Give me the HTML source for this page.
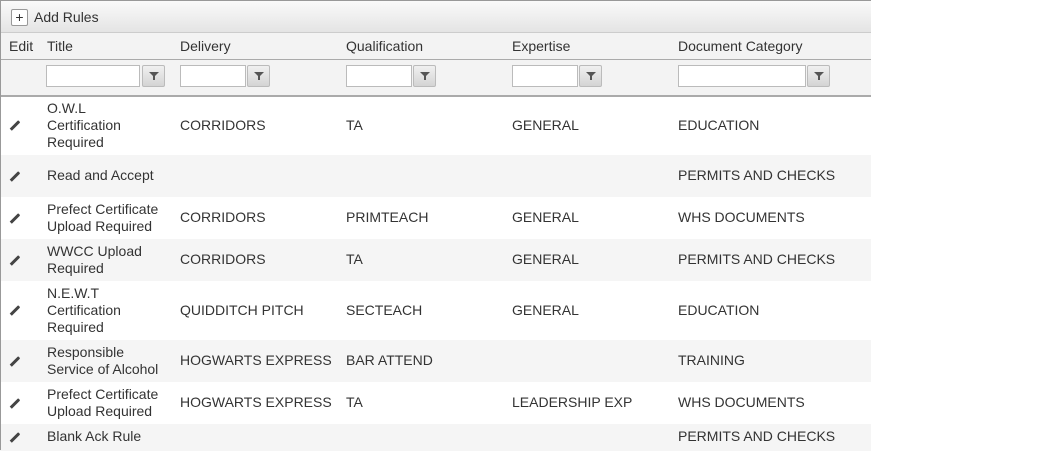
<!DOCTYPE html>
<html><head><style>
body{margin:0;width:1050px;height:450px;background:#fff;font-family:"Liberation Sans",sans-serif;font-size:14px;color:#333;position:relative;overflow:hidden}
#g{position:absolute;left:0;top:0;width:871px;height:450px;border-top:1px solid #999;box-sizing:border-box}
.lb{position:absolute;left:0;top:0;width:1px;height:450px;background:#999;z-index:5}
.tb{position:absolute;left:0;top:0;width:871px;height:31px;background:linear-gradient(#fafafa,#e4e4e4);border-bottom:1px solid #ccc}
.hd{position:absolute;left:0;top:32px;width:871px;height:26px;background:#f3f3f3;border-bottom:1px solid #aaa}
.fl{position:absolute;left:0;top:59px;width:871px;height:35px;background:#f3f3f3;border-bottom:2px solid #aaa}
.t{position:absolute;line-height:17px;white-space:nowrap}
.r{position:absolute;left:0;width:871px}
.alt{background:#f5f5f5}
.in{position:absolute;top:64px;height:20px;border:1px solid #bbb;background:#fff}
.fb{position:absolute;top:64px;width:21px;height:20px;border:1px solid #bbb;border-radius:2px;background:linear-gradient(#f0f0f0,#d4d4d4)}
.fb:after{content:"";position:absolute;left:6px;top:6px;border-left:5px solid transparent;border-right:5px solid transparent;border-top:5px solid #555}
.fb:before{content:"";position:absolute;left:10px;top:9px;width:2px;height:5px;background:#555}
.pen{position:absolute;left:9px;width:12px;height:3px;background:#444;transform:rotate(-45deg);border-radius:0 1px 1px 0}
</style></head><body>
<div id="g">
<div class="tb"></div>
<div style="position:absolute;left:11px;top:8px;width:15px;height:15px;border:1px solid #999;border-radius:2px;background:#fff;font-size:14px;line-height:14px;text-align:center">+</div>
<div class="t" style="left:34px;top:8px">Add Rules</div>
<div class="hd"></div>
<div class="t" style="left:9px;top:37px">Edit</div>
<div class="t" style="left:47px;top:37px">Title</div>
<div class="t" style="left:180px;top:37px">Delivery</div>
<div class="t" style="left:346px;top:37px">Qualification</div>
<div class="t" style="left:512px;top:37px">Expertise</div>
<div class="t" style="left:678px;top:37px">Document Category</div>
<div class="fl"></div>
<div class="in" style="left:46px;width:92px"></div><div class="fb" style="left:142px"></div>
<div class="in" style="left:180px;width:64px"></div><div class="fb" style="left:247px"></div>
<div class="in" style="left:346px;width:64px"></div><div class="fb" style="left:413px"></div>
<div class="in" style="left:512px;width:64px"></div><div class="fb" style="left:579px"></div>
<div class="in" style="left:678px;width:126px"></div><div class="fb" style="left:807px"></div>

<div class="r alt" style="top:154px;height:42px"></div>
<div class="r alt" style="top:238px;height:42px"></div>
<div class="r alt" style="top:339px;height:42px"></div>
<div class="r alt" style="top:423px;height:27px"></div>

<div class="pen" style="top:123px"></div>
<div class="t" style="left:47px;top:99px">O.W.L<br>Certification<br>Required</div>
<div class="t" style="left:180px;top:116px">CORRIDORS</div><div class="t" style="left:346px;top:116px">TA</div><div class="t" style="left:512px;top:116px">GENERAL</div><div class="t" style="left:678px;top:116px">EDUCATION</div>

<div class="pen" style="top:174px"></div>
<div class="t" style="left:47px;top:166px">Read and Accept</div><div class="t" style="left:678px;top:166px">PERMITS AND CHECKS</div>

<div class="pen" style="top:216px"></div>
<div class="t" style="left:47px;top:200px">Prefect Certificate<br>Upload Required</div>
<div class="t" style="left:180px;top:208px">CORRIDORS</div><div class="t" style="left:346px;top:208px">PRIMTEACH</div><div class="t" style="left:512px;top:208px">GENERAL</div><div class="t" style="left:678px;top:208px">WHS DOCUMENTS</div>

<div class="pen" style="top:258px"></div>
<div class="t" style="left:47px;top:242px">WWCC Upload<br>Required</div>
<div class="t" style="left:180px;top:250px">CORRIDORS</div><div class="t" style="left:346px;top:250px">TA</div><div class="t" style="left:512px;top:250px">GENERAL</div><div class="t" style="left:678px;top:250px">PERMITS AND CHECKS</div>

<div class="pen" style="top:308px"></div>
<div class="t" style="left:47px;top:284px">N.E.W.T<br>Certification<br>Required</div>
<div class="t" style="left:180px;top:301px">QUIDDITCH PITCH</div><div class="t" style="left:346px;top:301px">SECTEACH</div><div class="t" style="left:512px;top:301px">GENERAL</div><div class="t" style="left:678px;top:301px">EDUCATION</div>

<div class="pen" style="top:359px"></div>
<div class="t" style="left:47px;top:343px">Responsible<br>Service of Alcohol</div>
<div class="t" style="left:180px;top:351px">HOGWARTS EXPRESS</div><div class="t" style="left:346px;top:351px">BAR ATTEND</div><div class="t" style="left:678px;top:351px">TRAINING</div>

<div class="pen" style="top:401px"></div>
<div class="t" style="left:47px;top:385px">Prefect Certificate<br>Upload Required</div>
<div class="t" style="left:180px;top:393px">HOGWARTS EXPRESS</div><div class="t" style="left:346px;top:393px">TA</div><div class="t" style="left:512px;top:393px">LEADERSHIP EXP</div><div class="t" style="left:678px;top:393px">WHS DOCUMENTS</div>

<div class="pen" style="top:435px"></div>
<div class="t" style="left:47px;top:427px">Blank Ack Rule</div><div class="t" style="left:678px;top:427px">PERMITS AND CHECKS</div>
</div>
<div class="lb"></div>
</body></html>
